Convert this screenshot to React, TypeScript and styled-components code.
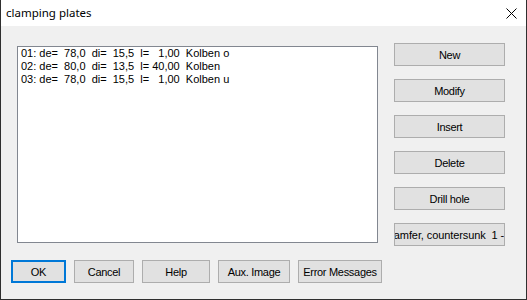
import React from 'react';
import styled, { createGlobalStyle } from 'styled-components';

const GlobalStyle = createGlobalStyle`
  html, body {
    margin: 0;
    padding: 0;
    background: #ffffff;
  }
  * {
    box-sizing: border-box;
  }
`;

const Window = styled.div`
  width: 527px;
  height: 300px;
  display: flex;
  flex-direction: column;
  background: #f0f0f0;
  border-left: 1px solid #2f2f2f;
  border-right: 1px solid #2f2f2f;
  border-bottom: 1px solid #2f2f2f;
  overflow: hidden;
`;

const TitleBar = styled.div`
  height: 26px;
  flex: none;
  display: flex;
  align-items: center;
  justify-content: space-between;
  background: #ffffff;
  padding: 0 9px 0 5px;
`;

const Title = styled.span`
  font-family: 'Noto Sans', 'Open Sans', sans-serif;
  font-size: 11.5px;
  color: #000000;
  line-height: 1;
  margin-top: -1px;
`;

const CloseIcon = styled.svg`
  display: block;
  width: 11px;
  height: 11px;
  margin-top: 1px;
`;

const Body = styled.div`
  flex: 1;
  display: flex;
  flex-direction: column;
  padding: 17px 20px 0 10px;
`;

const TopRow = styled.div`
  display: flex;
  align-items: flex-start;
  gap: 16px;
`;

const ListBox = styled.div`
  width: 361px;
  height: 197px;
  margin: 3px 0 0 6px;
  background: #ffffff;
  border: 1px solid #828790;
  padding: 0 3px;
  font-family: 'Liberation Sans', Arial, sans-serif;
  font-size: 11px;
  color: #000000;
`;

const ListItem = styled.div`
  height: 13px;
  line-height: 13px;
  white-space: pre;
`;

const SideColumn = styled.div`
  display: flex;
  flex-direction: column;
  gap: 13px;
`;

const Button = styled.div<{ $width: number; $default?: boolean; $spacing?: number }>`
  width: ${p => p.$width}px;
  height: 23px;
  display: flex;
  align-items: center;
  justify-content: center;
  overflow: hidden;
  white-space: pre;
  background: #e1e1e1;
  border: ${p => (p.$default ? '2px solid #0078d7' : '1px solid #adadad')};
  font-family: 'Liberation Sans', Arial, sans-serif;
  font-size: 11px;
  letter-spacing: ${p => p.$spacing ?? -0.3}px;
  color: #000000;
`;

const Label = styled.span`
  flex: none;
`;

const BottomRow = styled.div`
  display: flex;
  gap: 8px;
  margin-top: 14px;
`;

const items = [
  '01: de=  78,0  di=  15,5  l=   1,00  Kolben o',
  '02: de=  80,0  di=  13,5  l= 40,00  Kolben',
  '03: de=  78,0  di=  15,5  l=   1,00  Kolben u',
];

const sideButtons = [
  { label: 'New' },
  { label: 'Modify' },
  { label: 'Insert' },
  { label: 'Delete' },
  { label: 'Drill hole' },
  { label: 'Chamfer, countersunk  1 - 50', spacing: -0.1 },
];

const bottomButtons = [
  { label: 'OK', width: 55, isDefault: true },
  { label: 'Cancel', width: 60 },
  { label: 'Help', width: 68 },
  { label: 'Aux. Image', width: 72 },
  { label: 'Error Messages', width: 84 },
];

const App: React.FC = () => {
  return (
    <>
      <GlobalStyle />
      <Window>
        <TitleBar>
          <Title>clamping plates</Title>
          <CloseIcon viewBox="0 0 11 11">
            <path d="M0.5 0.5 L10.5 10.5 M10.5 0.5 L0.5 10.5" stroke="#000" strokeWidth="1" fill="none" />
          </CloseIcon>
        </TitleBar>
        <Body>
          <TopRow>
            <ListBox>
              {items.map(item => (
                <ListItem key={item}>{item}</ListItem>
              ))}
            </ListBox>
            <SideColumn>
              {sideButtons.map(b => (
                <Button key={b.label} $width={111} $spacing={b.spacing}>
                  <Label>{b.label}</Label>
                </Button>
              ))}
            </SideColumn>
          </TopRow>
          <BottomRow>
            {bottomButtons.map(b => (
              <Button key={b.label} $width={b.width} $default={b.isDefault}>
                <Label>{b.label}</Label>
              </Button>
            ))}
          </BottomRow>
        </Body>
      </Window>
    </>
  );
};

export default App;
